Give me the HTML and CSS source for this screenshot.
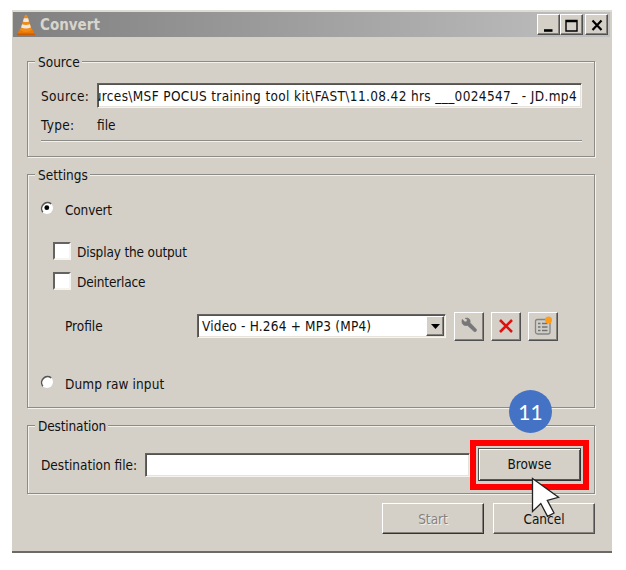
FILE: index.html
```
<!DOCTYPE html>
<html lang="en">
<head>
<meta charset="utf-8">
<title>Convert</title>
<link rel="stylesheet" href="styles.css">
</head>
<body>
<main class="window">
  <header class="titlebar">
    <svg class="cone" width="20" height="22" viewBox="0 0 20 22">
      <path d="M3.5 15h13l2.500 6H1z" fill="#e87808"/>
      <path d="M1 19.500h18v1.700H1z" fill="#c95d08"/>
      <path d="M8.800 1.300q1.200-1 2.400 0L16 16q-6 4-12 0z" fill="#f28a13"/>
      <path d="M7.900 4.200h4.200l1 3.200q-3.100 1.200-6.200 0z" fill="#e8e8e4"/>
      <path d="M6.100 10.200q3.900 1.600 7.800 0l1 3.300q-4.900 2-9.800 0z" fill="#e8e8e4"/>
    </svg>
    <h1 class="title">Convert</h1>
    <div class="controls">
      <button class="ctl"><svg width="22" height="20" viewBox="0 0 22 20"><path d="M6 15.500h8.500" stroke="#000" stroke-width="2.600"/></svg></button>
      <button class="ctl"><svg width="22" height="20" viewBox="0 0 22 20"><path d="M5 5.500h11v10.500H5zM5 6.500h11" fill="none" stroke="#000" stroke-width="1.400"/></svg></button>
      <button class="ctl close"><svg width="22" height="20" viewBox="0 0 22 20"><path d="M6.500 5.500l9 9.500M15.500 5.500l-9 9.500" stroke="#000" stroke-width="2.200"/></svg></button>
    </div>
  </header>

  <section class="group source">
    <h2 class="legend">Source</h2>
    <div class="row source-row">
      <label class="wide">Source:</label>
      <div class="field path"><span class="path-text">urces\MSF POCUS training tool kit\FAST\11.08.42 hrs ___0024547_ - JD.mp4</span></div>
    </div>
    <div class="row type-row"><span class="type-label wide">Type:</span><span>file</span></div>
    <div class="rule"></div>
  </section>

  <section class="group settings">
    <h2 class="legend">Settings</h2>
    <div class="row radio-row">
      <svg class="radio" width="14" height="14" viewBox="0 0 14 14"><circle cx="7" cy="7" r="6" fill="#fff"/><path d="M2.800 11.200A6 6 0 0 1 11.200 2.800" fill="none" stroke="#555" stroke-width="1.500"/><circle cx="6.800" cy="6.700" r="2.400"/></svg>
      <span class="tight">Convert</span>
    </div>
    <div class="row check-row"><i class="check"></i><span class="tight">Display the output</span></div>
    <div class="row check-row"><i class="check"></i><span class="tight">Deinterlace</span></div>
    <div class="row profile-row">
      <span class="profile-label">Profile</span>
      <div class="field combo"><span class="combo-text">Video - H.264 + MP3 (MP4)</span><button class="drop"><svg width="9" height="5" viewBox="0 0 9 5"><path d="M0 0h9L4.500 5z"/></svg></button></div>
      <button class="tool"><svg width="18" height="18" viewBox="0 0 18 18"><path d="M2.300 2.200L4.800 5l2-.5.500-2L5 1.300q2.800-1.200 4.600 1 1 1.700.5 3.400l6.100 6.300q1 1.300-.1 2.300-1.200 1-2.300 0L7.500 8.500Q4 9.300 2.300 6.800 1.200 4.400 2.300 2.200z" fill="#777" stroke="#777" stroke-width=".5"/></svg></button>
      <button class="tool"><svg width="18" height="18" viewBox="0 0 18 18"><path d="M3 3l12 12M15 3L3 15" stroke="#e01010" stroke-width="2.600"/></svg></button>
      <button class="tool"><svg width="20" height="20" viewBox="0 0 20 20"><rect x="2.500" y="3.500" width="14.500" height="14.500" rx="2" fill="#d0cec8" stroke="#858585" stroke-width="1.300"/><path d="M5 7.500h2.500M5 11h2.500M5 14.500h2.500M9 7.500h5.500M9 11h5.500M9 14.500h5.500" stroke="#737373" stroke-width="1.600"/><circle cx="15.500" cy="4" r="3.500" fill="#ff9d19"/></svg></button>
    </div>
    <div class="row dump-row">
      <svg class="radio" width="14" height="14" viewBox="0 0 14 14"><circle cx="7" cy="7" r="6" fill="#fff"/><path d="M2.800 11.200A6 6 0 0 1 11.200 2.800" fill="none" stroke="#555" stroke-width="1.500"/></svg>
      <span class="dump-text">Dump raw input</span>
    </div>
  </section>

  <section class="group destination">
    <h2 class="legend tight">Destination</h2>
    <div class="row dest-row">
      <label>Destination file:</label>
      <div class="field dest"></div>
      <div class="highlight"><button class="btn browse"><span>Browse</span></button></div>
    </div>
  </section>

  <footer class="actions">
    <button class="btn start"><span>Start</span></button>
    <button class="btn"><span>Cancel</span></button>
  </footer>
</main>
<div class="step">11</div>
<svg class="pointer" width="30" height="42" viewBox="0 0 30 42"><path d="M1.500 1.500v33l8.300-8 6.700 12.800 6.500-3.300-6.700-12.700 11.200-3z" fill="#fff" stroke="#222" stroke-width="1.300"/></svg>
</body>
</html>
```
FILE: styles.css
```
* { box-sizing: border-box; }
body {
  margin: 0;
  padding: 10px 14px 0 12px;
  background: #fff;
  font: 13.5px/18px "DejaVu Sans Condensed", "DejaVu Sans", sans-serif;
  font-stretch: condensed;
  color: #111;
}
button { font: inherit; color: inherit; padding: 0; border-radius: 0; }
svg { display: block; flex: none; }
.window {
  width: 600px;
  height: 543px;
  background: #d4d0c8;
  border-top: 2px solid #dedbd4;
  border-bottom: 2px solid #6b6a67;
}
.titlebar {
  display: flex;
  align-items: center;
  height: 25px;
  margin: 0 2px 0 1px;
  padding: 0 2px 0 3px;
  background: linear-gradient(90deg, #808080, #c0c0c0);
}
.title {
  margin: 0 auto 0 4px;
  font-size: 15px;
  font-weight: bold;
  color: #d8d5cd;
}
.controls { display: flex; }
.ctl, .tool, .btn, .drop {
  display: flex;
  align-items: center;
  justify-content: center;
  background: #d4d0c8;
  border: 1px solid;
  border-color: #fff #505050 #505050 #fff;
  box-shadow: inset -1px -1px #85827d;
}
.ctl { width: 23px; height: 21px; }
.close { margin-left: 2px; }
.row { display: flex; align-items: center; white-space: nowrap; }
.group {
  margin: 0 17px 0 15px;
  border: 1px solid #8b8b88;
  box-shadow: inset 1px 1px #f3f1ec, 1px 1px #f3f1ec;
}
.legend {
  width: max-content;
  height: 18px;
  margin: -9px 0 0 7px;
  padding: 0 2px 0 3px;
  background: #d4d0c8;
  font-size: 13.5px;
  font-weight: normal;
}
.wide { letter-spacing: 0.35px; }
.tight { letter-spacing: -0.15px; }
.source { height: 96px; margin-top: 24px; }
.settings { height: 234px; margin-top: 17px; }
.destination { height: 69px; margin-top: 17px; }
.field {
  background: #fff;
  border: 1px solid;
  border-color: #65635f #f6f4ef #f6f4ef #65635f;
  box-shadow: inset 1px 1px #55534f, inset -1px -1px #e6e3dc;
}
.source-row { margin: 12px 0 0 13px; }
.source-row label { width: 56px; }
.path {
  width: 485px;
  height: 25px;
  padding: 3px 4px 0 0;
  display: flex;
  justify-content: flex-end;
  overflow: hidden;
}
.path-text { letter-spacing: 0.36px; }
.type-row { margin: 8px 0 0 13px; }
.type-label { width: 56px; }
.rule {
  height: 2px;
  margin: 6px 12px 0 13px;
  background: #8b8b88;
  border-bottom: 1px solid #f3f1ec;
}
.radio-row { margin: 16px 0 0 13px; height: 20px; }
.radio { width: 14px; margin: -4px 10px 0 -1px; }
.radio + span { margin-left: 1px; }
.check-row { height: 30px; margin-left: 24px; }
.radio-row + .check-row { margin-top: 17px; }
.check {
  width: 18px;
  height: 18px;
  margin: -3px 6px 0 1px;
  background: #fff;
  border: 2px solid;
  border-color: #65635f #f6f4ef #f6f4ef #65635f;
}
.profile-row { margin: 14px 0 0 37px; height: 30px; }
.profile-label { width: 132px; }
.combo {
  display: flex;
  align-items: center;
  justify-content: space-between;
  width: 249px;
  height: 24px;
  padding: 1px 1px 1px 4px;
}
.combo-text { letter-spacing: 0.2px; }
.drop { width: 18px; height: 20px; }
.tool { width: 30px; height: 29px; margin-left: 7px; }
.combo + .tool { margin-left: 8px; }
.dump-row { margin: 33px 0 0 13px; height: 20px; }
.dump-text { letter-spacing: 0.1px; }
.dest-row { margin: 5px 0 0 13px; height: 49px; }
.dest-row label { width: 104px; }
.dest { width: 325px; height: 24px; }
.highlight {
  width: 119px;
  height: 50px;
  border: 6px solid #f00;
  padding: 2px;
  background: #d4d0c8;
}
.btn { width: 102px; height: 31px; }
.browse {
  width: 103px;
  height: 33px;
  border-color: #55534f #333 #333 #55534f;
  box-shadow: inset 1px 1px #fff, inset -1px -1px #555;
}
.actions {
  display: flex;
  justify-content: flex-end;
  gap: 9px;
  margin: 9px 17px 0 0;
}
.start {
  color: #85827d;
  text-shadow: 1px 1px #f3f1ec;
  border-right-color: #333;
  border-bottom-color: #333;
}
.step {
  position: absolute;
  left: 509px;
  top: 390px;
  width: 43px;
  height: 43px;
  border-radius: 50%;
  background: #4472c4;
  color: #fff;
  font: 21px/43px Lato, sans-serif;
  text-align: center;
}
.pointer { position: absolute; left: 531px; top: 477px; }
```
